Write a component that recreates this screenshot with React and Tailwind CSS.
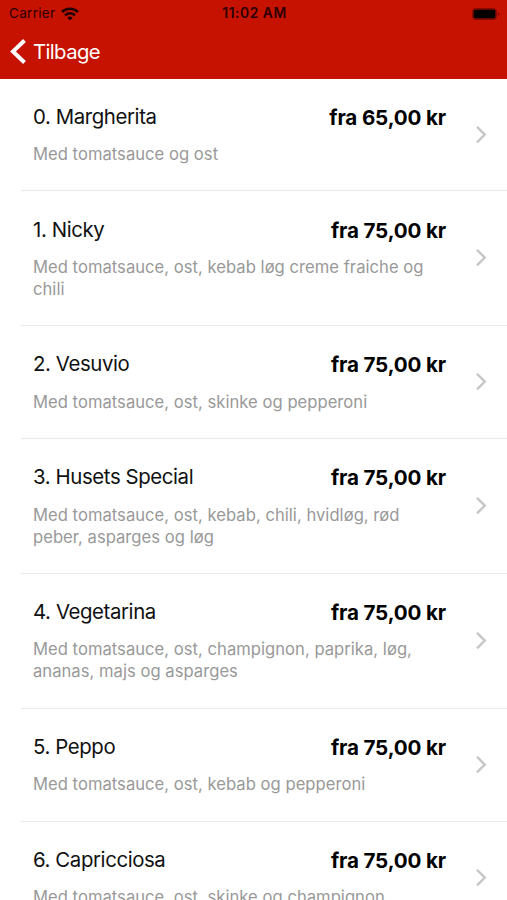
const dishes = [
  { name: "0. Margherita", price: "fra 65,00 kr", lines: ["Med tomatsauce og ost"], height: "h-[112px]", top: "pt-[24px]", gap: "mt-[11px]" },
  { name: "1. Nicky", price: "fra 75,00 kr", lines: ["Med tomatsauce, ost, kebab løg creme fraiche og", "chili"], height: "h-[135px]", top: "pt-[25px]", gap: "mt-[11px]" },
  { name: "2. Vesuvio", price: "fra 75,00 kr", lines: ["Med tomatsauce, ost, skinke og pepperoni"], height: "h-[113px]", top: "pt-[24px]", gap: "mt-[12px]" },
  { name: "3. Husets Special", price: "fra 75,00 kr", lines: ["Med tomatsauce, ost, kebab, chili, hvidløg, rød", "peber, asparges og løg"], height: "h-[135px]", top: "pt-[24px]", gap: "mt-[12px]" },
  { name: "4. Vegetarina", price: "fra 75,00 kr", lines: ["Med tomatsauce, ost, champignon, paprika, løg,", "ananas, majs og asparges"], height: "h-[135px]", top: "pt-[24px]", gap: "mt-[11px]" },
  { name: "5. Peppo", price: "fra 75,00 kr", lines: ["Med tomatsauce, ost, kebab og pepperoni"], height: "h-[113px]", top: "pt-[24px]", gap: "mt-[11px]" },
  { name: "6. Capricciosa", price: "fra 75,00 kr", lines: ["Med tomatsauce, ost, skinke og champignon"], height: "h-[113px]", top: "pt-[24px]", gap: "mt-[11px]" },
];

function StatusBar() {
  return (
    <div className="grid h-[27px] grid-cols-3 items-center pl-[9px] pr-[7px] text-[#2a0000]">
      <div className="flex items-center gap-[6px]">
        <span className="text-[13.5px] tracking-[0.3px]">Carrier</span>
        <svg width="18" height="14" viewBox="0 0 18 14" fill="none" stroke="#210000" strokeWidth="2.5">
          <path d="M1 5a11.4 11.4 0 0 1 16 0" />
          <path d="M4 8.3a7.2 7.2 0 0 1 10 0" />
          <path d="M9 13.5 6.3 10.8a3.9 3.9 0 0 1 5.4 0Z" fill="#210000" stroke="none" />
        </svg>
      </div>
      <span className="whitespace-nowrap text-center text-[13.8px] font-semibold tracking-[0.55px]">11:02 AM</span>
      <svg className="justify-self-end" width="30" height="14" viewBox="0 0 30 14">
        <rect x="2.5" y="1.5" width="24" height="11" rx="3" fill="none" stroke="#850800" />
        <rect x="3.5" y="2.5" width="22" height="9" rx="1.5" fill="#000" />
        <path d="M28 5v4q1.5-.5 1.5-2T28 5Z" fill="#850800" />
      </svg>
    </div>
  );
}

function DishRow({ dish }) {
  return (
    <li className={`ml-[21px] flex shrink-0 border-b border-[#e9e9e9] pl-3 ${dish.height}`}>
      <div className="min-w-0 flex-1">
        <div className={`flex items-start justify-between ${dish.top}`}>
          <h2 className="text-[20.4px] leading-[28px] tracking-[-0.4px] text-[#111]">{dish.name}</h2>
          <span className="mt-px text-[20.6px] font-bold leading-[28px] tracking-[-0.15px] text-black">{dish.price}</span>
        </div>
        <p className={`whitespace-nowrap text-[16.6px] leading-[22px] tracking-[0.03px] text-[#999] ${dish.gap}`}>
          {dish.lines.map((line) => (
            <span key={line} className="block">{line}</span>
          ))}
        </p>
      </div>
      <div className="flex w-[61px] items-center pl-[29px]">
        <svg width="13" height="18" viewBox="0 0 13 18" fill="none" stroke="#c7c7c9" strokeWidth="2.4">
          <path d="M2 .8 9.8 8.6 2 16.4" />
        </svg>
      </div>
    </li>
  );
}

export default function App() {
  return (
    <div className="flex h-[900px] w-[507px] flex-col overflow-hidden bg-white font-[Inter,sans-serif]">
      <header className="h-[79px] shrink-0 bg-[#c61200]">
        <StatusBar />
        <button className="flex h-[49px] items-center pl-[9px] text-white">
          <svg width="18" height="28" viewBox="0 0 18 28" fill="none" stroke="currentColor" strokeWidth="4">
            <path d="M15.5 2.5 4 13.5 15.5 24.5" />
          </svg>
          <span className="ml-[6px] pt-[2px] text-[20.3px] tracking-[-0.6px]">Tilbage</span>
        </button>
      </header>
      <ul className="flex flex-col">
        {dishes.map((dish) => (
          <DishRow key={dish.name} dish={dish} />
        ))}
      </ul>
    </div>
  );
}
